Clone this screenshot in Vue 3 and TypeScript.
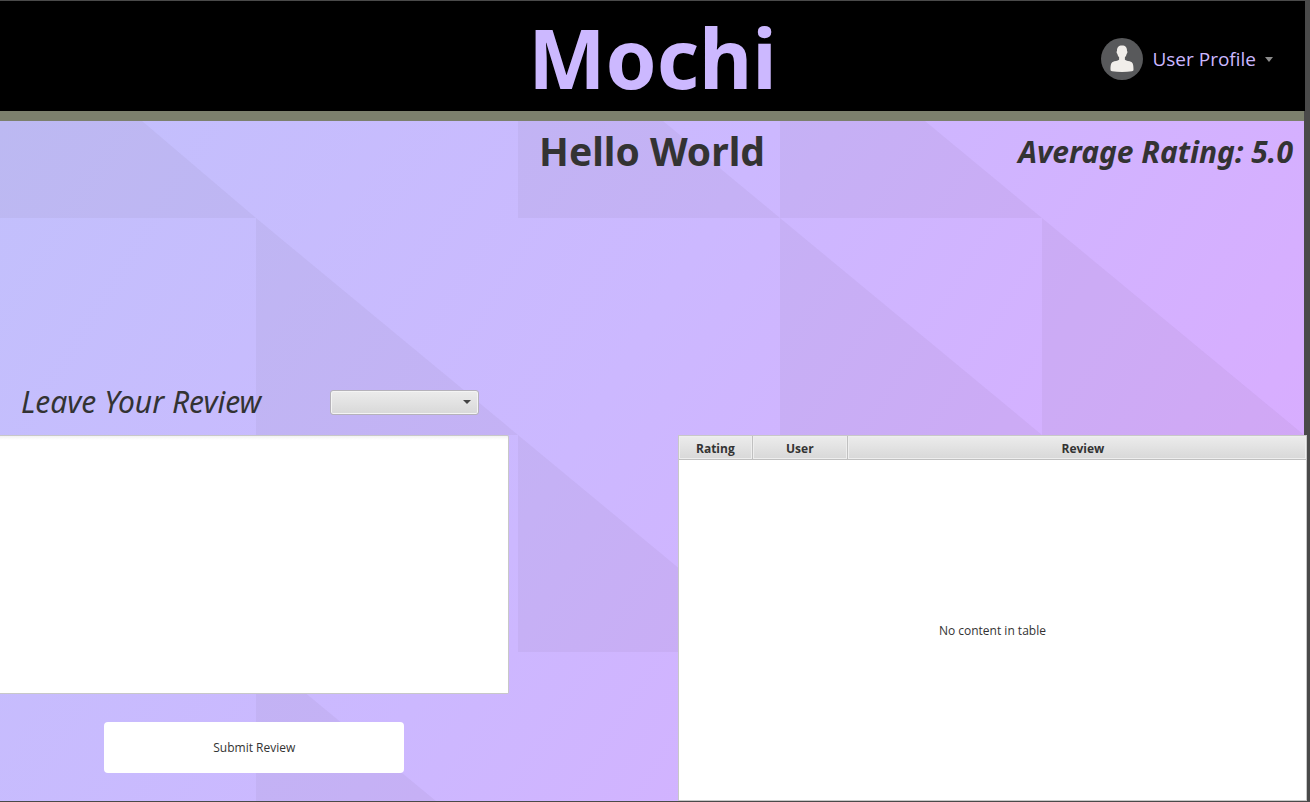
<script setup lang="ts">
import { ref } from 'vue'

const rating = ref('')
const review = ref('')
const columns = ['Rating', 'User', 'Review']
</script>

<template>
  <div class="window">
    <header class="topbar">
      <h1 class="brand">Mochi</h1>
      <button class="profile" type="button">
        <svg class="avatar" viewBox="0 0 42 42" aria-hidden="true">
          <circle cx="21" cy="21" r="21" fill="#58595b" />
          <path
            d="M21 7.500c-3.500 0-5.200 2-5 5.500-.8.300-.4 2.600.4 2.900.4 1.700 1 2.600 1.700 3.300v2.600c-1.500 1.300-4.500 1.300-6.300 2.100-1.800.8-2.300 3-2.300 7.700 0 1.200.5 1.500 1.600 1.700 6.300.9 13.500.9 19.800 0 1.200-.2 1.600-.5 1.600-1.700 0-4.700-.5-6.900-2.300-7.700-1.800-.8-4.800-.8-6.300-2.100v-2.600c.7-.7 1.300-1.600 1.700-3.300.8-.3 1.200-2.600.4-2.900.2-3.500-1.500-5.500-5-5.500z"
            fill="#f1eeea"
          />
        </svg>
        <span>User Profile</span>
        <svg class="caret" viewBox="0 0 8 5" aria-hidden="true">
          <path d="M0 0h8L4 5z" fill="#8c8c8c" />
        </svg>
      </button>
    </header>

    <main class="page">
      <svg class="facets" aria-hidden="true">
        <path
          d="M0 0H142L256 97H0zM256 97L518 314H256zM518 0H663L780 97H518zM780 0H925L1042 97H780zM780 97L1042 314H780zM1042 97L1304 314H1042zM518 314L780 531H518zM256 531L518 748H256z"
        />
      </svg>

      <div class="titles">
        <h2 class="title">Hello World</h2>
        <p class="average">Average Rating: 5.0</p>
      </div>

      <div class="columns">
        <form class="review" @submit.prevent>
          <div class="review-head">
            <label class="prompt" for="review">Leave Your Review</label>
            <div class="picker">
              <select v-model="rating" aria-label="Rating">
                <option value=""></option>
                <option v-for="n in 5" :key="n" :value="String(n)">{{ n }}</option>
              </select>
              <svg class="arrow" viewBox="0 0 8 4" aria-hidden="true">
                <path d="M0 0h8L4 4z" fill="#444" />
              </svg>
            </div>
          </div>
          <textarea id="review" v-model="review"></textarea>
          <button class="submit" type="submit">Submit Review</button>
        </form>

        <div class="table-box">
          <table>
            <colgroup>
              <col class="c-rating" />
              <col class="c-user" />
              <col />
            </colgroup>
            <thead>
              <tr>
                <th v-for="c in columns" :key="c" scope="col">{{ c }}</th>
              </tr>
            </thead>
            <tbody>
              <tr>
                <td colspan="3">No content in table</td>
              </tr>
            </tbody>
          </table>
        </div>
      </div>
    </main>
  </div>
</template>

<style>
body {
  margin: 0;
  background: #4a4a4a;
}
</style>

<style scoped>
.window {
  box-sizing: border-box;
  min-height: 100vh;
  padding: 1px 0;
  display: flex;
  flex-direction: column;
  background: #4a4a4a;
  font-family: 'Noto Sans', 'Open Sans', sans-serif;
  color: #333;
}
.topbar {
  display: grid;
  grid-template-columns: 1fr auto 1fr;
  align-items: center;
  height: 110px;
  margin-right: 5px;
  background: #000;
}
.brand {
  grid-column: 2;
  margin: 0;
  padding-top: 2px;
  font-size: 82px;
  line-height: 108px;
  font-weight: 700;
  color: #ccb8ff;
}
.profile {
  grid-column: 3;
  justify-self: end;
  display: flex;
  align-items: center;
  margin-right: 32px;
  padding: 6px 0 0;
  border: 0;
  background: none;
  font: 400 19px/28px 'Open Sans', 'Noto Sans', sans-serif;
  color: #ccb8ff;
}
.avatar {
  width: 42px;
  height: 42px;
  margin-right: 9px;
}
.caret {
  width: 8px;
  height: 5px;
  margin-left: 9px;
}
.page {
  position: relative;
  flex: 1;
  display: flex;
  flex-direction: column;
  margin-right: 6px;
  border-top: 10px solid #7c806d;
  background: linear-gradient(122deg, #c2c0fc 0%, #ccb8ff 45%, #d7aeff 83%, #daaaff 100%);
}
.facets {
  position: absolute;
  left: 0;
  top: 0;
  width: 100%;
  height: 100%;
  fill: rgba(70, 50, 60, 0.05);
}
.titles {
  position: relative;
  display: grid;
  grid-template-columns: 1fr auto 1fr;
  align-items: center;
  height: 60px;
}
.title {
  grid-column: 2;
  margin: 0;
  font-size: 39px;
  line-height: 60px;
}
.average {
  margin: 0;
  padding-right: 11px;
  text-align: right;
  font-size: 30px;
  font-style: italic;
  font-weight: 700;
  white-space: nowrap;
}
.columns {
  position: relative;
  flex: 1;
  display: flex;
  justify-content: space-between;
  padding-top: 188px;
}
.review {
  display: flex;
  flex-direction: column;
  width: 39%;
}
.review-head {
  display: flex;
  align-items: center;
  justify-content: space-between;
  height: 66px;
  padding: 0 30px 0 21px;
}
.prompt {
  padding-bottom: 2px;
  font-size: 30px;
  font-style: italic;
}
.picker {
  position: relative;
  width: 149px;
  height: 25px;
}
.picker select {
  appearance: none;
  display: block;
  width: 100%;
  height: 100%;
  padding: 0 24px 0 8px;
  border: 1px solid #b5b2ba;
  border-radius: 3px;
  background: linear-gradient(#ececec, #d8d8d8);
  box-shadow: inset 0 0 0 1px #f4f4f4;
  font: inherit;
  font-size: 12px;
}
.arrow {
  position: absolute;
  right: 8px;
  top: 10px;
  width: 8px;
  height: 4px;
  pointer-events: none;
}
textarea {
  box-sizing: border-box;
  display: block;
  width: 100%;
  height: 259px;
  padding: 8px;
  border: 1px solid #c8c8c8;
  border-left: 0;
  border-radius: 0 2px 2px 0;
  background: linear-gradient(#f2f2f2, #fff 4px);
  resize: none;
  font: inherit;
  font-size: 12px;
}
.submit {
  align-self: center;
  width: 300px;
  height: 51px;
  margin: 28px 0;
  border: 0;
  border-radius: 4px;
  background: #fff;
  font: 400 12px/16px 'Open Sans', 'Noto Sans', sans-serif;
  color: #333;
}
.table-box {
  display: flex;
  width: 48.25%;
  margin: 66px -3px 0 0;
}
table {
  flex: 1;
  height: 100%;
  table-layout: fixed;
  border-collapse: separate;
  border-spacing: 0;
  border: 1px solid #c8c8c8;
  background: #fff;
  font: 400 12px/16px 'Open Sans', 'Noto Sans', sans-serif;
}
.c-rating {
  width: 74px;
}
.c-user {
  width: 95px;
}
th {
  height: 24px;
  box-sizing: border-box;
  padding: 2px 0 0;
  border-right: 1px solid #c0c0c0;
  border-bottom: 1px solid #c0c0c0;
  background: linear-gradient(#ececec, #d8d8d8);
  box-shadow: inset 0 0 0 1px #eee;
  font-weight: 700;
  text-align: center;
}
th:last-child {
  padding-left: 12px;
  border-right: 0;
}
td {
  padding: 2px 0 0;
  text-align: center;
  vertical-align: middle;
}
</style>
